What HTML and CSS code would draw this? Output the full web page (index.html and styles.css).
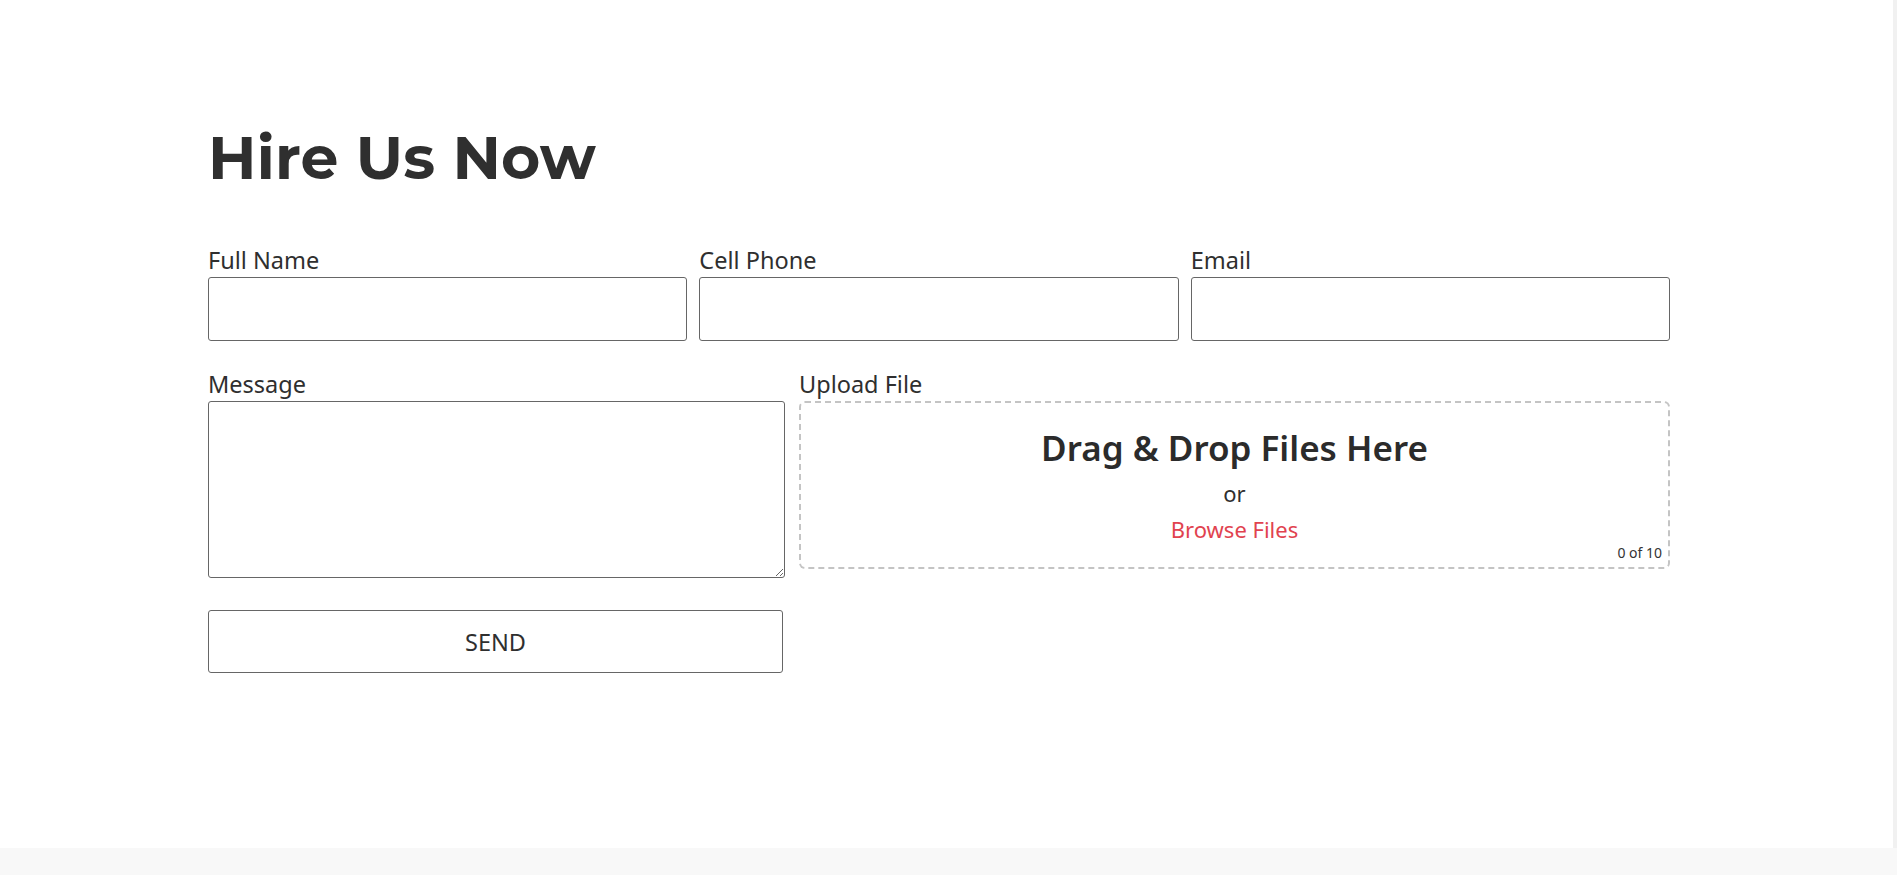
FILE: index.html
```html
<!DOCTYPE html>
<html lang="en">
<head>
<meta charset="utf-8">
<title>Hire Us Now</title>
<link rel="stylesheet" href="styles.css">
</head>
<body>
<div class="page">
  <main class="content">
    <section class="hire">
      <h1 class="title">Hire Us Now</h1>
      <form class="form">
        <div class="row row-3">
          <div class="field">
            <label class="label">Full Name</label>
            <input class="input" type="text">
          </div>
          <div class="field">
            <label class="label">Cell Phone</label>
            <input class="input" type="text">
          </div>
          <div class="field">
            <label class="label">Email</label>
            <input class="input" type="text">
          </div>
        </div>
        <div class="row row-2">
          <div class="field">
            <label class="label">Message</label>
            <textarea class="textarea"></textarea>
          </div>
          <div class="field">
            <label class="label">Upload File</label>
            <div class="dropzone">
              <div class="drop-title">Drag &amp; Drop Files Here</div>
              <div class="drop-or">or</div>
              <div class="drop-browse">Browse Files</div>
              <div class="drop-count">0 of 10</div>
            </div>
          </div>
        </div>
        <div class="row row-2">
          <button class="send" type="button">SEND</button>
        </div>
      </form>
    </section>
  </main>
  <div class="scroll-strip"></div>
</div>
<footer class="footer"></footer>
</body>
</html>
```

FILE: styles.css
```css
* { box-sizing: border-box; }
html, body { margin: 0; padding: 0; }
body {
  font-family: "Noto Sans", "Open Sans", sans-serif;
  color: #2f2f2f;
  background: #fff;
}
.page {
  display: flex;
  height: 848px;
}
.content {
  flex: 1;
  padding-left: 208px;
}
.scroll-strip {
  width: 4px;
  background: #f1f1f1;
}
.hire {
  width: 1462px;
  padding-top: 123px;
}
.title {
  font-family: "Montserrat", "Inter", sans-serif;
  font-weight: 700;
  font-size: 60px;
  line-height: 70px;
  margin: 0 0 52px 0;
  letter-spacing: 0.2px;
  color: #2f2f2f;
}
.form { display: flex; flex-direction: column; }
.row { display: grid; }
.row-3 {
  grid-template-columns: 1fr 1fr 1fr;
  column-gap: 12px;
  margin-bottom: 28px;
}
.row-2 {
  grid-template-columns: 577px 1fr;
  column-gap: 14px;
  margin-bottom: 32px;
}
.field { display: flex; flex-direction: column; }
.label {
  font-size: 23.5px;
  line-height: 30px;
  margin-bottom: 2px;
  color: #2f2f2f;
}
.input {
  height: 64px;
  border: 1px solid #666;
  border-radius: 3px;
  background: #fff;
  font: inherit;
}
.textarea {
  height: 177px;
  border: 1px solid #666;
  border-radius: 3px;
  resize: vertical;
  font: inherit;
  margin: 0;
}
.dropzone {
  position: relative;
  height: 168px;
  border: 2px dashed #c4c4c4;
  border-radius: 6px;
  display: flex;
  flex-direction: column;
  align-items: center;
  padding-top: 21px;
}
.drop-title {
  font-size: 35px;
  font-weight: 600;
  line-height: 48px;
  color: #2b2b2b;
}
.drop-or {
  font-size: 22px;
  line-height: 30px;
  margin-top: 6px;
}
.drop-browse {
  font-size: 22px;
  line-height: 30px;
  color: #e1434f;
  margin-top: 6px;
}
.drop-count {
  position: absolute;
  right: 6px;
  bottom: 5px;
  font-size: 14px;
  color: #333;
}
.send {
  height: 63px;
  border: 1px solid #666;
  border-radius: 3px;
  background: #fff;
  font-family: inherit;
  font-size: 23.5px;
  color: #2f2f2f;
  padding: 0;
  margin-left: 0;
  width: 575px;
}
.footer {
  height: 27px;
  background: #f8f8f8;
}
```
